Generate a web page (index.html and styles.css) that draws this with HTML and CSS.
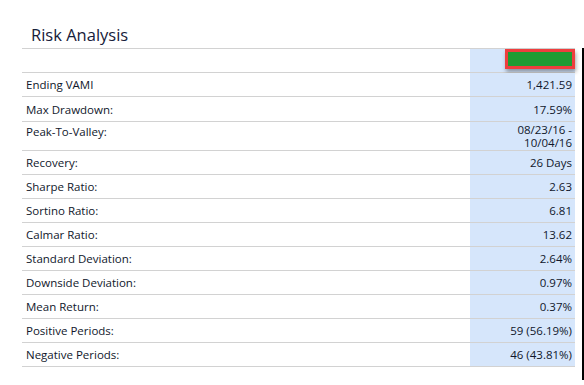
FILE: index.html
```html
<!DOCTYPE html>
<html>
<head>
<meta charset="utf-8">
<link rel="stylesheet" href="styles.css">
</head>
<body>
<h1 class="title">Risk Analysis</h1>
<div class="panel">
  <div class="table">
    <div class="row head"><div class="label"></div><div class="value"><span class="swatch"></span></div></div>
    <div class="row"><div class="label">Ending VAMI</div><div class="value">1,421.59</div></div>
    <div class="row tall1"><div class="label">Max Drawdown:</div><div class="value">17.59%</div></div>
    <div class="row tall2"><div class="label top">Peak-To-Valley:</div><div class="value two"><span>08/23/16 -</span><span>10/04/16</span></div></div>
    <div class="row"><div class="label">Recovery:</div><div class="value">26 Days</div></div>
    <div class="row"><div class="label">Sharpe Ratio:</div><div class="value">2.63</div></div>
    <div class="row"><div class="label">Sortino Ratio:</div><div class="value">6.81</div></div>
    <div class="row"><div class="label">Calmar Ratio:</div><div class="value">13.62</div></div>
    <div class="row"><div class="label">Standard Deviation:</div><div class="value">2.64%</div></div>
    <div class="row"><div class="label">Downside Deviation:</div><div class="value">0.97%</div></div>
    <div class="row"><div class="label">Mean Return:</div><div class="value">0.37%</div></div>
    <div class="row"><div class="label">Positive Periods:</div><div class="value">59 (56.19%)</div></div>
    <div class="row"><div class="label">Negative Periods:</div><div class="value">46 (43.81%)</div></div>
  </div>
</div>
</body>
</html>
```
FILE: styles.css
```css
html, body {
  margin: 0;
  padding: 0;
  background: #ffffff;
  font-family: "Open Sans", "Noto Sans", sans-serif;
  color: #10172b;
}
.title {
  margin: 0;
  padding: 0 0 0 31px;
  height: 49px;
  box-sizing: border-box;
  padding-top: 24px;
  font-size: 16.5px;
  line-height: 22px;
  font-weight: 400;
  color: #16203a;
}
.panel {
  width: 584px;
  box-sizing: border-box;
  padding: 0 7px 13px 22px;
  border-right: 2px solid #000;
}
.table {
  width: 553px;
  border-top: 1px solid #d2d2d2;
  margin-top: -1px;
}
.row {
  display: grid;
  grid-template-columns: 448px 105px;
  height: 24px;
  box-sizing: border-box;
  border-bottom: 1px solid #d2d2d2;
  font-size: 11.5px;
}
.row.tall1 { height: 25px; }
.row.tall2 { height: 29px; }
.label {
  padding-left: 4px;
  display: flex;
  align-items: center;
}
.label.top {
  align-items: flex-start;
  padding-top: 2px;
}
.value {
  background: #d6e6fb;
  padding-right: 3px;
  display: flex;
  align-items: center;
  justify-content: flex-end;
  text-align: right;
}
.value.two {
  flex-direction: column;
  align-items: flex-end;
  justify-content: flex-start;
  line-height: 13px;
  padding-top: 1px;
}
.head .value {
  align-items: flex-start;
  padding-right: 0;
}
.swatch {
  display: block;
  width: 70px;
  height: 20px;
  box-sizing: border-box;
  border: 3px solid #ef3e3e;
  background: #1f9c33;
  box-shadow: 1px 3px 4px rgba(0, 0, 0, 0.35);
}
```
